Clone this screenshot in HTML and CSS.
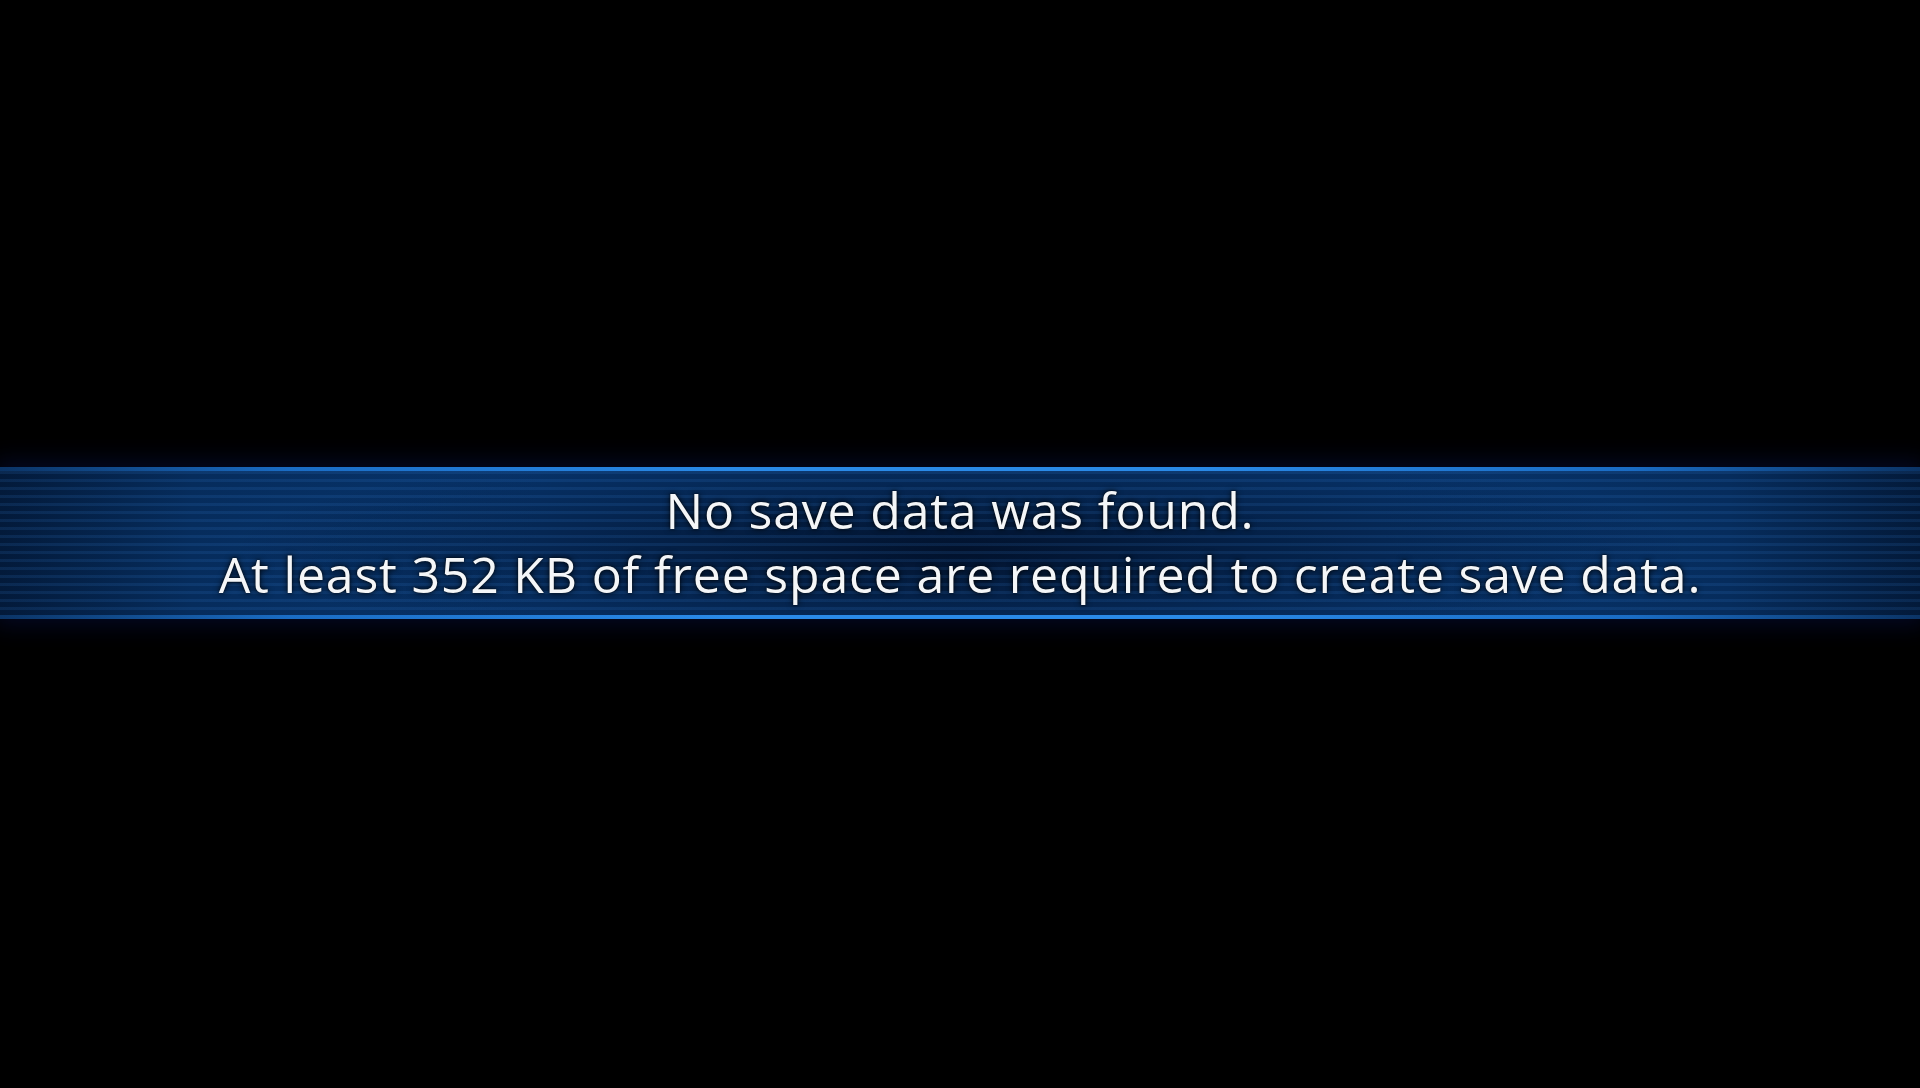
FILE: index.html
```html
<!DOCTYPE html>
<html lang="en">
<head>
<meta charset="utf-8">
<title>No save data</title>
<link rel="stylesheet" href="styles.css">
</head>
<body>
<div class="screen">
  <div class="banner">
    <div class="edge edge-top"></div>
    <div class="panel">
      <p class="msg">No save data was found.</p>
      <p class="msg">At least 352 KB of free space are required to create save data.</p>
    </div>
    <div class="edge edge-bottom"></div>
  </div>
</div>
</body>
</html>
```
FILE: styles.css
```css
html, body {
  margin: 0;
  padding: 0;
  background: #000;
}
.screen {
  width: 1920px;
  height: 1088px;
  padding-top: 467px;
  box-sizing: border-box;
  background: #000;
  overflow: hidden;
}
.banner {
  display: flex;
  flex-direction: column;
  box-shadow: 0 0 22px 6px rgba(4, 10, 40, 0.9);
}
.edge {
  height: 4px;
  background: linear-gradient(to right, #0b3466 0%, #1a6cc4 15%, #2a8ae8 38%, #2a8ae8 62%, #1a6cc4 85%, #0b3466 100%);
}
.panel {
  height: 144px;
  padding-top: 7px;
  box-sizing: border-box;
  display: flex;
  flex-direction: column;
  align-items: center;
  background:
    repeating-linear-gradient(to bottom, rgba(60, 140, 230, 0.13) 0 3px, rgba(0, 0, 0, 0) 3px 8px),
    radial-gradient(ellipse 38% 75% at 50% 55%, rgba(0, 6, 22, 0.75) 0%, rgba(0, 6, 22, 0) 100%),
    linear-gradient(to right, #031a3a 0%, #062c5c 10%, #07346c 28%, #07346c 72%, #062c5c 90%, #031a3a 100%);
}
.msg {
  margin: 0;
  font-family: "Open Sans", "DejaVu Sans", sans-serif;
  font-size: 50px;
  line-height: 64px;
  letter-spacing: 0.8px;
  color: #f4f6f8;
  white-space: nowrap;
  text-shadow: 0 0 6px rgba(0, 0, 0, 0.9), 0 0 2px rgba(0, 0, 0, 0.8);
}
```
